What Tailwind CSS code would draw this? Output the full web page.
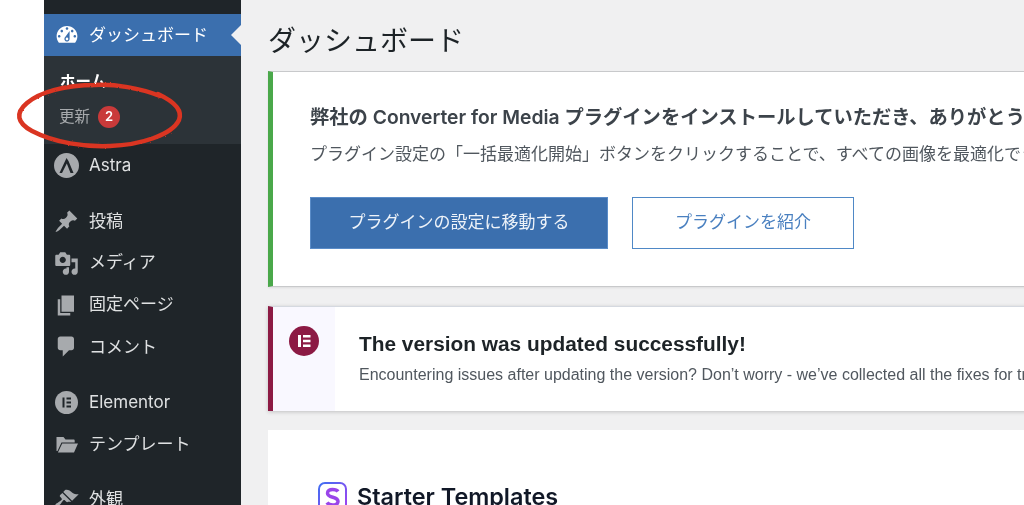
<!DOCTYPE html>
<html lang="ja">
<head>
<meta charset="utf-8">
<script src="https://cdn.jsdelivr.net/npm/@tailwindcss/browser@4"></script>
</head>
<body class="m-0">
<div class="relative flex h-[505px] w-[1024px] overflow-hidden bg-white blur-[0.35px] font-['Inter','Noto_Sans_CJK_JP',sans-serif]">
  <div class="w-[44px] shrink-0 bg-white"></div>

  <aside class="w-[197px] shrink-0 bg-[#1f2529] text-[17px] text-[#dfe1e2]">
    <div class="h-[14px]"></div>
    <div class="relative flex h-[42px] items-center bg-[#3b6fae] text-white">
      <span class="flex w-[45px] justify-center"><svg class="h-[26px] w-[26px]" viewBox="0 0 20 20" fill="#fff"><path d="M3.76 16h12.48c1.1-1.37 1.76-3.11 1.76-5 0-4.42-3.58-8-8-8s-8 3.58-8 8c0 1.89.66 3.63 1.76 5zM10 4c.55 0 1 .45 1 1s-.45 1-1 1-1-.45-1-1 .45-1 1-1zM6 6c.55 0 1 .45 1 1s-.45 1-1 1-1-.45-1-1 .45-1 1-1zm8 0c.55 0 1 .45 1 1s-.45 1-1 1-1-.45-1-1 .45-1 1-1zm-5.37 5.55L12 7v6c0 1.1-.9 2-2 2s-2-.9-2-2c0-.57.24-1.08.63-1.45zM4 10c.55 0 1 .45 1 1s-.45 1-1 1-1-.45-1-1 .45-1 1-1zm12 0c.55 0 1 .45 1 1s-.45 1-1 1-1-.45-1-1 .45-1 1-1zm-5 3c0-.55-.45-1-1-1s-1 .45-1 1 .45 1 1 1 1-.45 1-1z"/></svg></span>
      <span class="pt-[2px]">ダッシュボード</span>
      <span class="absolute right-0 top-[11px] h-0 w-0 border-y-[10px] border-r-[10px] border-y-transparent border-r-[#f0f0f1]"></span>
    </div>
    <div class="h-[88px] bg-[#2c3338] pl-[16px] pt-[14px]">
      <div class="flex h-[24px] items-center text-[15.5px] font-bold text-white">ホーム</div>
      <div class="mt-[11px] flex h-[24px] items-center gap-[8px] text-[15.5px] text-[#a7aaad]">
        <span class="-ml-[1px]">更新</span>
        <span class="flex h-[22px] w-[22px] items-center justify-center rounded-full bg-[#c93a3a] text-[13px] font-semibold text-white">2</span>
      </div>
    </div>

    <div class="flex h-[42px] items-center">
      <span class="flex w-[45px] justify-center"><svg class="h-[25px] w-[25px]" viewBox="0 0 25 25"><circle cx="12.500" cy="12.500" r="12.500" fill="#a7aaad"/><path d="M12.500 5 L5.500 20 L8 20 L12.800 10.500 L16.500 20 L19.500 20 L14.500 8 Z" fill="#1f2529"/></svg></span>
      <span class="pt-[2px]">Astra</span>
    </div>

    <div class="h-[15px]"></div>
    <div class="flex h-[41.7px] items-center">
      <span class="flex w-[45px] justify-center"><svg class="h-[25px] w-[25px]" viewBox="0 0 20 20" fill="#a7aaad"><path d="M10.44 3.02l1.82-1.82 6.36 6.35-1.83 1.82c-1.05-.68-2.48-.57-3.41.36l-.75.75c-.92.93-1.04 2.35-.35 3.41l-1.83 1.82-2.41-2.41-2.8 2.79c-.42.42-3.38 2.71-3.8 2.29s1.86-3.39 2.28-3.81l2.79-2.79L4.1 9.36l1.83-1.82c1.05.69 2.48.57 3.4-.36l.75-.75c.93-.92 1.05-2.35.36-3.41z"/></svg></span>
      <span>投稿</span>
    </div>
    <div class="flex h-[41.7px] items-center">
      <span class="flex w-[45px] justify-center"><svg class="h-[25px] w-[25px]" viewBox="0 0 20 20" fill="#a7aaad"><path d="M13 11V4c0-.55-.45-1-1-1h-1.67L9 1H5L3.67 3H2c-.55 0-1 .45-1 1v7c0 .55.45 1 1 1h10c.55 0 1-.45 1-1zM7 4.5c1.38 0 2.5 1.12 2.5 2.5S8.38 9.5 7 9.5 4.5 8.38 4.5 7 5.62 4.5 7 4.5zM14 6h5v10.5c0 1.38-1.12 2.5-2.5 2.5S14 17.88 14 16.5s1.12-2.5 2.5-2.5c.17 0 .34.02.5.05V9h-3V6zm-4 8.05V13h2v3.5c0 1.38-1.12 2.5-2.5 2.5S7 17.88 7 16.5 8.12 14 9.5 14c.17 0 .34.02.5.05z"/></svg></span>
      <span class="pb-[1px]">メディア</span>
    </div>
    <div class="flex h-[41.7px] items-center">
      <span class="flex w-[45px] justify-center"><svg class="h-[25px] w-[25px]" viewBox="0 0 20 20" fill="#a7aaad"><path d="M6 15V2h10v13H6zm-1 1h8v2H3V5h2v11z"/></svg></span>
      <span>固定ページ</span>
    </div>
    <div class="flex h-[41.7px] items-center">
      <span class="flex w-[45px] justify-center"><svg class="h-[25px] w-[25px]" viewBox="0 0 20 20" fill="#a7aaad"><path d="M5 2h9c1.1 0 2 .9 2 2v7c0 1.1-.9 2-2 2h-2l-5 5v-5H5c-1.1 0-2-.9-2-2V4c0-1.1.9-2 2-2z"/></svg></span>
      <span class="pt-[2px]">コメント</span>
    </div>

    <div class="h-[14px]"></div>
    <div class="flex h-[42px] items-center">
      <span class="flex w-[45px] justify-center"><svg class="h-[23px] w-[23px]" viewBox="0 0 23 23"><circle cx="11.500" cy="11.500" r="11.500" fill="#a7aaad"/><path d="M7.500 6.500h2v10h-2zM11.500 6.500h4.500v2h-4.500zM11.500 10.500h4.500v2h-4.500zM11.500 14.500h4.500v2h-4.500z" fill="#1f2529"/></svg></span>
      <span>Elementor</span>
    </div>
    <div class="flex h-[42px] items-center">
      <span class="flex w-[45px] justify-center"><svg class="h-[22px] w-[22px]" viewBox="0 0 22 22" fill="#a7aaad"><path d="M0.500 3h7l2 2.500h8c.8 0 1.200.5 1.200 1.200V8.500H5.500L1.500 17H.5zM6.200 9.500H22l-4 9H1.900z"/></svg></span>
      <span>テンプレート</span>
    </div>

    <div class="h-[13px]"></div>
    <div class="flex h-[42px] items-center">
      <span class="flex w-[45px] justify-center"><svg class="h-[25px] w-[25px]" viewBox="0 0 20 20" fill="#a7aaad"><path d="M14.48 11.06L7.41 3.99l1.5-1.5c.5-.56 2.3-.47 3.51.32 1.21.8 1.43 1.28 2.91 2.1 1.18.64 2.45 1.26 4.45.85zm-.71.71L6.7 4.7 4.93 6.47c-.39.39-.39 1.02 0 1.41l1.06 1.06c.39.39.39 1.03 0 1.42-.6.6-1.43 1.11-2.21 1.69-.35.26-.7.53-1.01.84C1.43 13.23.4 14.95 1.1 15.65c.7.7 2.41-.33 3.75-1.68.31-.31.58-.66.84-1.01.58-.78 1.09-1.61 1.69-2.21.39-.39 1.02-.39 1.41 0l1.06 1.06c.39.39 1.02.39 1.41 0z"/></svg></span>
      <span>外観</span>
    </div>
  </aside>

  <main class="w-[783px] shrink-0 bg-[#f0f0f1] pl-[27px]">
    <h1 class="flex h-[71px] items-start whitespace-nowrap pt-[21px] text-[28px] leading-[40px] font-normal text-[#1d2327]">ダッシュボード</h1>

    <section class="h-[216px] w-[800px] border border-[#c8c9cb] border-l-[5px] border-l-[#4aa84a] bg-white pl-[37px] shadow-[0_1px_2px_rgba(0,0,0,0.08)]">
      <p class="mt-[31px] whitespace-nowrap text-[19.3px] leading-[28px] font-semibold text-[#3c434a]">弊社の Converter for Media プラグインをインストールしていただき、ありがとうございます</p>
      <p class="mt-[10px] whitespace-nowrap text-[17px] leading-[26px] text-[#50575e]">プラグイン設定の「一括最適化開始」ボタンをクリックすることで、すべての画像を最適化できます。</p>
      <div class="mt-[30px] flex gap-[24px]">
        <span class="flex h-[52px] w-[298px] items-center justify-center border border-[#5a8cc8] bg-[#3b6fae] text-[17px] text-[#eef3f9]">プラグインの設定に移動する</span>
        <span class="flex h-[52px] w-[222px] items-center justify-center border-[1.5px] border-[#4f88c6] bg-white text-[17px] text-[#4a80c0]">プラグインを紹介</span>
      </div>
    </section>

    <section class="mt-[19px] flex h-[105px] w-[800px] border-l-[5px] border-t border-t-[#d5d9e0] border-l-[#8c1a44] bg-white shadow-[0_1px_4px_rgba(0,0,0,0.2)]">
      <div class="w-[62px] shrink-0 bg-[#f9f8ff] pl-[16px] pt-[19px]">
        <svg class="h-[30px] w-[30px]" viewBox="0 0 30 30"><circle cx="15" cy="15" r="15" fill="#8c1a44"/><path d="M9 9h3v12H9zM14 9h7.500v2.600H14zM14 13.700h7.500v2.600H14zM14 18.400h7.500V21H14z" fill="#fff"/></svg>
      </div>
      <div class="whitespace-nowrap pl-[24px] font-['Liberation_Sans',sans-serif]">
        <p class="mt-[22px] text-[20.85px] leading-[30px] font-bold text-[#1d2327]">The version was updated successfully!</p>
        <p class="mt-[5px] text-[16px] leading-[22px] text-[#50575e]">Encountering issues after updating the version? Don’t worry - we’ve collected all the fixes for troubleshooting.</p>
      </div>
    </section>

    <section class="mt-[19px] h-[100px] w-[800px] bg-white pl-[50px] pt-[52px]">
      <div class="flex items-center gap-[10px]">
        <svg class="h-[30px] w-[29px] shrink-0" viewBox="0 0 29 30">
          <defs><linearGradient id="sg" x1="0" y1="0" x2="1" y2="1"><stop offset="0" stop-color="#3f6ff2"/><stop offset="1" stop-color="#a63ff0"/></linearGradient></defs>
          <rect x="1" y="1" width="27" height="28" rx="6" fill="none" stroke="url(#sg)" stroke-width="2"/>
          <path d="M20 9.500c-1-1.500-3-2-5.500-2C11.500 7.500 9.500 9 9.500 11.200c0 5 10.500 3 10.500 8 0 2.500-2.300 3.800-5.300 3.800-2.700 0-4.700-.8-5.700-2.500" fill="none" stroke="#9a45ea" stroke-width="3.500"/>
        </svg>
        <span class="whitespace-nowrap text-[23.400px] leading-[30px] font-semibold text-[#111827]">Starter Templates</span>
      </div>
    </section>
  </main>

  <svg class="pointer-events-none absolute left-0 top-0 h-[160px] w-[200px]" viewBox="0 0 200 160">
    <defs><filter id="rough" x="-10%" y="-20%" width="120%" height="140%"><feTurbulence type="fractalNoise" baseFrequency="0.6" numOctaves="2" seed="4"/><feDisplacementMap in="SourceGraphic" scale="2"/></filter></defs>
    <path d="M160 96 C 140 88, 115 84, 95 85 C 65 85, 40 92, 27 103 C 15 113, 17 123, 32 131 C 55 143, 85 147, 110 146 C 140 145, 172 135, 179 120 C 183 110, 175 102, 158 94" fill="none" stroke="#da3420" stroke-width="4.500" stroke-linecap="round" filter="url(#rough)"/>
  </svg>
</div>
</body>
</html>
